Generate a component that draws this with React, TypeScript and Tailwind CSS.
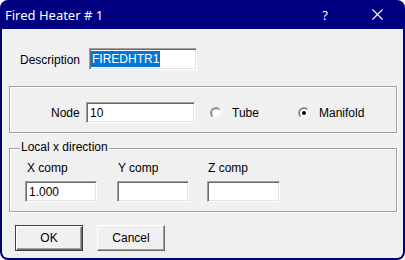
import React from "react";

const sunken =
  "bg-white border border-t-[#a0a0a0] border-l-[#a0a0a0] border-b-white border-r-white shadow-[inset_1px_1px_0_#696969,inset_-1px_-1px_0_#e3e3e3]";

function Radio({ checked }: { checked?: boolean }) {
  return (
    <span className="w-[12px] h-[12px] rounded-full border border-t-[#a0a0a0] border-l-[#a0a0a0] border-b-white border-r-white flex shrink-0">
      <span className="flex-1 rounded-full border border-t-[#696969] border-l-[#696969] border-b-[#e3e3e3] border-r-[#e3e3e3] bg-white flex items-center justify-center">
        {checked && <span className="w-[4px] h-[4px] rounded-full bg-black" />}
      </span>
    </span>
  );
}

function Field({ value, w }: { value?: string; w: string }) {
  return (
    <div className={`${sunken} ${w} h-[21px] flex items-center pl-[3px]`}>
      <span className="leading-[14px]">{value}</span>
    </div>
  );
}

export default function App() {
  return (
    <div className="w-[405px] h-[260px] bg-white">
      <div className="w-[405px] h-[260px] bg-[#000080] rounded-[8px] flex flex-col overflow-hidden">
        <div className="h-[29px] flex items-center text-white font-['Noto_Sans',sans-serif] shrink-0">
          <span className="ml-[5px] text-[13px] leading-[16px]">Fired Heater # 1</span>
          <span className="ml-auto w-[10px] text-center text-[13px] leading-[16px]">?</span>
          <svg className="ml-[42px] mr-[22px]" width="11" height="11" viewBox="0 0 11 11">
            <path d="M0.5 0.5 L10.5 10.5 M10.5 0.5 L0.5 10.5" stroke="white" strokeWidth="1.1" />
          </svg>
        </div>
        <div className="flex-1 mx-[2px] mb-[2px] bg-[#f0f0f0] rounded-b-[6px] flex flex-col font-['Liberation_Sans',Arial,sans-serif] text-[12px] leading-[14px] text-black">
          <div className="flex items-center mt-[19px] pl-[18px] h-[22px]">
            <span className="w-[69px] pt-[2px]">Description</span>
            <div className={`${sunken} w-[108px] h-[22px] flex items-center pl-[1px]`}>
              <span className="bg-[#0078d7] text-white h-[16px] leading-[16px] px-[1px]">FIREDHTR1</span>
            </div>
          </div>

          <div className="mt-[16px] ml-[7px] w-[388px] h-[47px] border border-[#a0a0a0] shadow-[inset_1px_1px_0_#fff,1px_1px_0_#fff] flex items-center pt-[6px] pl-[41px]">
            <span className="w-[35px]">Node</span>
            <Field value="10" w="w-[109px]" />
            <div className="ml-[15px] w-[88px] flex items-center">
              <Radio />
              <span className="ml-[10px]">Tube</span>
            </div>
            <div className="flex items-center">
              <Radio checked />
              <span className="ml-[9px]">Manifold</span>
            </div>
          </div>

          <div className="relative mt-[15px] ml-[7px] w-[388px] h-[64px] border border-[#a0a0a0] shadow-[inset_1px_1px_0_#fff,1px_1px_0_#fff] pt-[12px] pl-[15px]">
            <span className="absolute left-[10px] top-[-9px] px-[1px] bg-[#f0f0f0]">Local x direction</span>
            <div className="flex">
              <div className="w-[92px] flex flex-col">
                <span className="ml-[2px]">X comp</span>
                <div className="mt-[6px]"><Field value="1.000" w="w-[72px]" /></div>
              </div>
              <div className="w-[90px] flex flex-col">
                <span className="ml-[1px]">Y comp</span>
                <div className="mt-[6px]"><Field w="w-[72px]" /></div>
              </div>
              <div className="w-[90px] flex flex-col">
                <span className="ml-[1px]">Z comp</span>
                <div className="mt-[6px]"><Field w="w-[73px]" /></div>
              </div>
            </div>
          </div>

          <div className="flex mt-[13px] ml-[13px]">
            <button className="w-[68px] h-[26px] bg-[#f0f0f0] border border-[#404040] shadow-[inset_1px_1px_0_#fff,inset_-1px_-1px_0_#696969,inset_-2px_-2px_0_#a0a0a0] flex items-center justify-center">
              OK
            </button>
            <button className="ml-[14px] w-[68px] h-[26px] bg-[#f0f0f0] border border-t-white border-l-white border-b-[#696969] border-r-[#696969] shadow-[inset_-1px_-1px_0_#a0a0a0] flex items-center justify-center">
              Cancel
            </button>
          </div>
        </div>
      </div>
    </div>
  );
}
